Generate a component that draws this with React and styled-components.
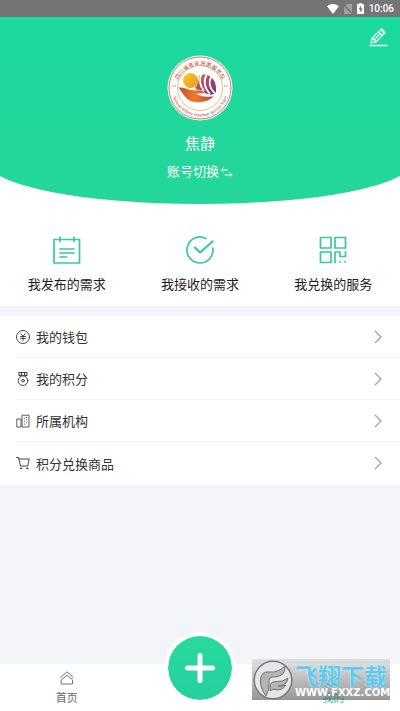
import React from "react";
import styled, { createGlobalStyle } from "styled-components";

const GlobalStyle = createGlobalStyle`
  body {
    margin: 0;
    background: #f3f5f8;
    font-family: "Liberation Sans", "Noto Sans CJK SC", sans-serif;
  }
  * {
    box-sizing: border-box;
  }
  button {
    border: none;
    padding: 0;
    background: transparent;
    font-family: inherit;
    color: inherit;
    cursor: pointer;
  }
  a {
    color: inherit;
    text-decoration: none;
  }
  svg {
    display: block;
    flex-shrink: 0;
  }
`;

const Page = styled.div`
  min-height: 100vh;
  display: flex;
  flex-direction: column;
`;

const StatusBar = styled.div`
  height: 17px;
  padding: 0 6px;
  display: flex;
  align-items: center;
  justify-content: flex-end;
  gap: 5px;
  background: #757575;
  color: white;
  font: 500 10px Roboto, sans-serif;
`;

const Top = styled.header`
  position: relative;
  overflow: hidden;
  padding: 38px 0 22px;
  display: flex;
  flex-direction: column;
  align-items: center;
  background: white;
  color: white;
  /* the green area is a bit wider than the page, so the curve is cut at the sides */
  &::before {
    content: "";
    position: absolute;
    top: 0;
    bottom: 0;
    left: -3%;
    width: 106%;
    background: linear-gradient(#1bd99f, #25d69a);
    border-radius: 0 0 50% 50% / 0 0 42px 42px;
  }
  > * {
    position: relative;
  }
`;

const EditButton = styled.button`
  && {
    position: absolute;
    top: 11px;
    right: 12px;
  }
`;

const UserName = styled.h1`
  margin: 11px 0 0;
  font-size: 15px;
  line-height: 24px;
  font-weight: 400;
`;

const SwitchAccount = styled.button`
  margin-top: 6px;
  display: flex;
  align-items: center;
  gap: 1px;
  font-size: 13px;
  line-height: 20px;
`;

const Stats = styled.nav`
  display: flex;
  padding: 32px 0 11px;
  background: white;
`;

const StatItem = styled.a`
  flex: 1;
  display: flex;
  flex-direction: column;
  align-items: center;
  gap: 11px;
  font-size: 13px;
  line-height: 20px;
  && {
    color: #1c1c1c;
  }
`;

const StatIcon = styled.span`
  color: #36cb98;
`;

const Menu = styled.ul`
  list-style: none;
  margin: 10px 0 0;
  padding: 0 0 1px;
  background: white;
`;

const MenuItem = styled.li`
  padding-left: 16px;
  a {
    height: 42px;
    padding-right: 18px;
    display: flex;
    align-items: center;
    gap: 6px;
    color: #333;
    font-size: 13px;
  }
  &:not(:last-child) a {
    border-bottom: 1px solid #f5f5f5;
  }
  span {
    flex: 1;
  }
`;

const TabBar = styled.nav`
  position: relative;
  margin-top: auto;
  height: 47px;
  display: flex;
  justify-content: space-between;
  background: white;
`;

const Tab = styled.a`
  width: 33.33%;
  padding-top: 7px;
  display: flex;
  flex-direction: column;
  align-items: center;
  gap: 5px;
  font-size: 11px;
  line-height: 16px;
  && {
    color: ${(props) => (props.$active ? "#2bd09b" : "#666")};
  }
`;

const AddButton = styled.button`
  && {
    position: absolute;
    top: -32px;
    left: calc(50% - 36px);
    width: 72px;
    height: 72px;
    border: 4px solid white;
    border-radius: 50%;
    background: linear-gradient(#27da9b, #26cfa0);
    background-clip: padding-box;
    display: flex;
    align-items: center;
    justify-content: center;
  }
`;

const Watermark = styled.div`
  position: absolute;
  right: 10px;
  bottom: 11px;
  width: 138px;
  height: 41px;
  padding-left: 1px;
  display: flex;
  align-items: center;
  gap: 2px;
  background: linear-gradient(rgba(190, 190, 190, 0.4), rgba(80, 80, 80, 0.6));
`;

const WatermarkText = styled.div`
  display: flex;
  flex-direction: column;
  color: white;
  font: 700 10px/10px "DejaVu Sans", sans-serif;
  strong {
    color: #5ccbed;
    font: 700 23px/26px "Noto Sans CJK SC", sans-serif;
    text-shadow: 0 0 1px white;
  }
`;

const stroke = {
  fill: "none",
  stroke: "currentColor",
  strokeLinecap: "round",
  strokeLinejoin: "round",
};

const WifiIcon = () => (
  <svg width="12" height="10" viewBox="0 0 12 10">
    <path d="M6 10L0 2.200Q6-2 12 2.200z" fill="white" />
  </svg>
);

const NoSimIcon = () => (
  <svg width="8" height="10" viewBox="0 0 8 10">
    <path d="M3 0h5v10H0V3z" fill="#a0a0a0" />
    <path d="M0 1l8 8.500" stroke="#757575" strokeWidth="1.200" />
  </svg>
);

const BatteryIcon = () => (
  <svg width="7" height="11" viewBox="0 0 7 11">
    <path d="M2 0h3v1h2v10H0V1h2z" fill="white" />
    <path d="M4 2.500L1.500 6.500h1.700V9.500L5.700 5.500H4z" fill="#757575" />
  </svg>
);

const EditIcon = () => (
  <svg width="19" height="19" viewBox="0 0 19 19" {...stroke} strokeWidth="1.200">
    <path d="M2 15l1.200-5L11.500 1.700q1-1 2 0l1.800 1.800q1 1 0 2L7 13.800zM9.500 3.700l3.800 3.800M11.500 1.700l3.800 3.800M5 12l6-6M3.200 10L7 13.800" />
    <path d="M1 17.500h17" strokeWidth="1.400" />
  </svg>
);

const SwapIcon = () => (
  <svg width="13" height="11" viewBox="0 0 13 11" {...stroke} strokeWidth="1">
    <path d="M7.500 3H1l2.500-2.300M1 3l2.200 2M5 8h7L9.500 5.800M12 8L9.800 10.200" />
  </svg>
);

const Emblem = () => (
  <svg width="66" height="66" viewBox="0 0 66 66" role="img" aria-label="四川省老年志愿服务队">
    <defs>
      <linearGradient id="emblemHand" x1="0" y1="0" x2="1" y2="0">
        <stop offset="0" stopColor="#b9502f" />
        <stop offset="0.45" stopColor="#ee7a2d" />
        <stop offset="1" stopColor="#a8472f" />
      </linearGradient>
      <linearGradient id="emblemSun" x1="0" y1="0" x2="1" y2="1">
        <stop offset="0" stopColor="#f6cf2c" />
        <stop offset="1" stopColor="#f1911f" />
      </linearGradient>
      <linearGradient id="emblemStripe" x1="0" y1="0" x2="1" y2="1">
        <stop offset="0" stopColor="#e8743a" />
        <stop offset="0.5" stopColor="#a3456a" />
        <stop offset="1" stopColor="#6d3a78" />
      </linearGradient>
      <path id="arcTop" d="M9.500 34A23.500 23.500 0 0 1 56.500 34" />
      <path id="arcBottom" d="M4.500 33A28.500 28.500 0 0 0 61.500 33" />
    </defs>
    <circle cx="33" cy="33" r="32.500" fill="#fffdf9" />
    <circle cx="33" cy="33" r="31" fill="none" stroke="#b5705c" strokeWidth="0.900" />
    <circle cx="33" cy="33" r="22.500" fill="white" stroke="#e3a063" strokeWidth="0.700" />
    <text fontSize="5.500" fill="#b34d40" fontFamily="Noto Sans CJK SC">
      <textPath href="#arcTop" startOffset="50%" textAnchor="middle">四川省老年志愿服务队</textPath>
    </text>
    <text fontSize="4" fill="#a44840" fontFamily="Liberation Sans">
      <textPath href="#arcBottom" startOffset="50%" textAnchor="middle">Sichuan Elderly Volunteer Service Team</textPath>
    </text>
    <path d="M5 31h4M57 31h4" stroke="#b68075" strokeWidth="1" strokeDasharray="1 0.500" />
    <path d="M32 21q6-4 12 1 6 5 5 15-3 4-8 2-9-2-13-6 4-6 4-12z" fill="url(#emblemStripe)" />
    <path d="M35 18q-5 9 2 18M40 19q-6 10 3 20M44.500 21q-5 9 3 17" fill="none" stroke="white" strokeWidth="1.800" />
    <circle cx="23.500" cy="25.500" r="7.500" fill="url(#emblemSun)" />
    <path
      d="M11 32q5 0 9 1.500 4 1.800 8 1.500 8-.5 10 3-3 1-8 .8 6 4 17.500 2.200-6 6-15.500 6.500-9 .5-14-5.500-2.500-3-7-10z"
      fill="url(#emblemHand)"
      stroke="white"
      strokeWidth="0.500"
    />
  </svg>
);

const NotesIcon = () => (
  <svg width="28" height="28" viewBox="0 0 28 28" {...stroke} strokeWidth="1.700">
    <path d="M1 3.500h25.500v23.500H1zM7 1v4.500M21 1v4.500" />
    <path d="M7 13h14M7 17h14M7 21h6.500" />
  </svg>
);

const DoneIcon = () => (
  <svg width="28" height="28" viewBox="0 0 28 28" {...stroke} strokeWidth="1.700">
    <path d="M20 2.500A13 13 0 1 0 26.800 12" />
    <path d="M9 11.500l5 5L26.500 5.500" strokeWidth="2.200" />
  </svg>
);

const QrIcon = () => (
  <svg width="28" height="28" viewBox="0 0 28 28" {...stroke} strokeWidth="1.700">
    <path d="M1.500 1.500h10.500v10.500H1.500zM16 1.500h10.500v10.500H16zM1.500 16h10.500v10.500H1.500z" />
    <path d="M16 26.500V16h5v4.500h5.500V16" strokeLinecap="square" />
    <path d="M21 25.500v.5M26 25.500v.5" />
  </svg>
);

const WalletIcon = () => (
  <svg width="14" height="14" viewBox="0 0 14 14" {...stroke} strokeWidth="0.900">
    <circle cx="7" cy="7" r="6.500" />
    <path d="M4.800 3.700L7 6.300l2.200-2.600M4.500 6.500h5M4.500 8.400h5M7 6.300v4.200" />
  </svg>
);

const MedalIcon = () => (
  <svg width="14" height="14" viewBox="0 0 14 14" {...stroke} strokeWidth="0.900">
    <path d="M3 .5h8v2.800L9.300 4.200M3 .5v2.800l1.700 .9M5.500.5v3M8.500.5v3M3 3.300h8" />
    <circle cx="7" cy="8.700" r="4.800" />
    <circle cx="7" cy="8.700" r="1.300" />
  </svg>
);

const BuildingIcon = () => (
  <svg width="14" height="14" viewBox="0 0 14 14" {...stroke} strokeWidth="0.800">
    <path d="M1.200 5h3.800v8H1.200zM6.500 1.200h6.500v11.800H6.500z" />
    <path d="M8.500 4v.3M10.500 5.500v.3M8.500 7v.3M10.500 8.500v.3M10.500 3.300v.2M8.500 10v.2" />
  </svg>
);

const CartIcon = () => (
  <svg width="14" height="14" viewBox="0 0 14 14" {...stroke} strokeWidth="0.900">
    <path d="M.5 1.500h2l2 8.500h7.300l1.400-7H3" />
    <circle cx="5" cy="12.300" r="0.600" />
    <circle cx="11.200" cy="12.300" r="0.600" />
  </svg>
);

const ArrowIcon = () => (
  <svg width="8" height="14" viewBox="0 0 8 14" fill="none" stroke="#a3a3a3" strokeWidth="1.300">
    <path d="M1 1l6 6-6 6" />
  </svg>
);

const HomeIcon = () => (
  <svg width="14" height="14" viewBox="0 0 14 14" {...stroke} strokeWidth="0.900">
    <path d="M.7 6.500L7 .8l6.300 5.700M1.500 8.800L7 4.300l5.500 4.500V13h-11z" />
  </svg>
);

const UserIcon = () => (
  <svg width="14" height="14" viewBox="0 0 14 14" {...stroke} strokeWidth="0.900">
    <circle cx="7" cy="4" r="3" />
    <path d="M1.500 13q0-5 5.500-5t5.500 5z" />
  </svg>
);

const PlusIcon = () => (
  <svg width="32" height="32" viewBox="0 0 32 32" stroke="white" strokeWidth="5" strokeLinecap="round">
    <path d="M16 3.500v25M3.500 16h25" />
  </svg>
);

const FeatherLogo = () => (
  <svg width="40" height="40" viewBox="0 0 40 40">
    <circle cx="20" cy="20" r="18.800" fill="#e6e6e6" stroke="#777" strokeWidth="1.500" />
    <path
      d="M13 36Q7 28 7.500 20 8 11 16 12q9 1 16-6 1 10-10 11-7-1-6 6 .5 7-3 13z"
      fill="#b5b5b5"
      stroke="#737373"
      strokeWidth="1"
    />
    <path
      d="M17 27q0-6 7-5.500 6 .5 11-3.500-1 8-10 8 4 1 8-1-4 6-11 4.500-3-.5-5 1.500z"
      fill="#b5b5b5"
      stroke="#737373"
      strokeWidth="1"
    />
  </svg>
);

const stats = [
  { label: "我发布的需求", Icon: NotesIcon },
  { label: "我接收的需求", Icon: DoneIcon },
  { label: "我兑换的服务", Icon: QrIcon },
];

const menu = [
  { label: "我的钱包", Icon: WalletIcon },
  { label: "我的积分", Icon: MedalIcon },
  { label: "所属机构", Icon: BuildingIcon },
  { label: "积分兑换商品", Icon: CartIcon },
];

const App = () => {
  return (
    <Page>
      <GlobalStyle />
      <StatusBar>
        <WifiIcon />
        <NoSimIcon />
        <BatteryIcon />
        10:06
      </StatusBar>
      <Top>
        <EditButton aria-label="编辑">
          <EditIcon />
        </EditButton>
        <Emblem />
        <UserName>焦静</UserName>
        <SwitchAccount>
          账号切换
          <SwapIcon />
        </SwitchAccount>
      </Top>
      <Stats>
        {stats.map(({ label, Icon }) => (
          <StatItem href="#" key={label}>
            <StatIcon>
              <Icon />
            </StatIcon>
            {label}
          </StatItem>
        ))}
      </Stats>
      <Menu>
        {menu.map(({ label, Icon }) => (
          <MenuItem key={label}>
            <a href="#">
              <Icon />
              <span>{label}</span>
              <ArrowIcon />
            </a>
          </MenuItem>
        ))}
      </Menu>
      <TabBar>
        <Tab href="#">
          <HomeIcon />
          首页
        </Tab>
        <AddButton aria-label="发布">
          <PlusIcon />
        </AddButton>
        <Tab href="#" $active>
          <UserIcon />
          我的
        </Tab>
        <Watermark>
          <FeatherLogo />
          <WatermarkText>
            <strong>飞翔下载</strong>
            WWW.FXXZ.COM
          </WatermarkText>
        </Watermark>
      </TabBar>
    </Page>
  );
};

export default App;
